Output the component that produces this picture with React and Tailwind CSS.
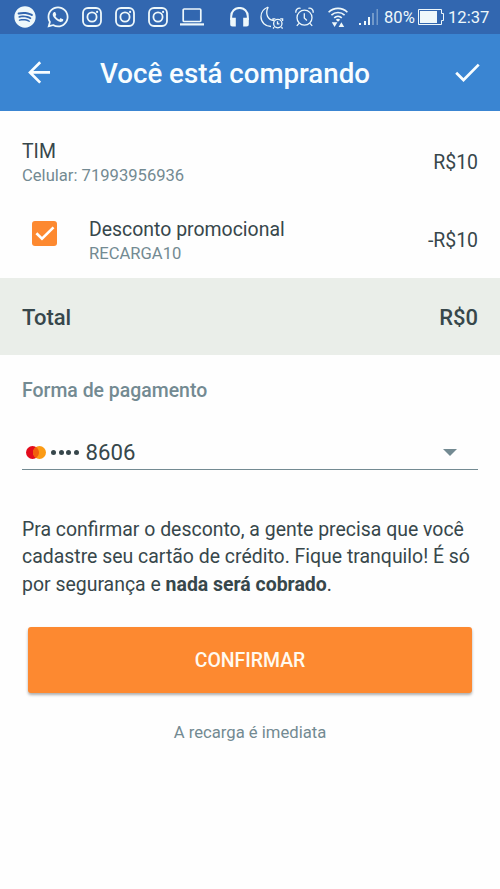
import React, { useState } from "react";
import { FaSpotify, FaWhatsapp } from "react-icons/fa";

export default function App() {
  const [discount, setDiscount] = useState(true);

  return (
    <main className="min-h-[889px] w-full max-w-[500px] bg-[#fefefe] font-['Roboto',sans-serif] text-[19.44px] leading-6 text-[#37474b]">
      <StatusBar />

      {/* toolbar */}
      <header className="flex h-[77px] items-center bg-[#3a85d2] pr-5 pl-7 text-[#f8fdff]">
        <button type="button" aria-label="Voltar">
          <svg className="block size-[23px]" viewBox="0 0 23 23" fill="none" stroke="currentColor" strokeWidth="2.7">
            <path d="M22 11.4H2M12.2 1.2 2 11.4l10.2 10.2" />
          </svg>
        </button>
        <h1 className="ml-[49px] flex-1 pt-0.5 text-[27.7px] leading-8 font-medium">
          Você está comprando
        </h1>
        <button type="button" aria-label="Concluir">
          <svg className="block h-[19px] w-[25px]" viewBox="0 0 25 19" fill="none" stroke="currentColor" strokeWidth="2.7">
            <path d="m1.2 9.8 7.3 7.2L23.7 1.6" />
          </svg>
        </button>
      </header>

      {/* itens */}
      <ul>
        <li className="flex items-center justify-between px-[22px] pt-7">
          <ItemText title="TIM" subtitle="Celular: 71993956936" />
          <span>R$10</span>
        </li>
        <li className="flex items-center px-[22px] pt-[30px] pb-[13px]">
          <button
            type="button"
            role="checkbox"
            aria-checked={discount}
            aria-label="Desconto promocional"
            onClick={() => setDiscount(!discount)}
            className="mr-8 mb-[15px] ml-[10px] grid size-[25px] place-items-center rounded-[3px] bg-[#fd8930] text-white"
          >
            {discount && (
              <svg className="block h-[15px] w-5" viewBox="0 0 20 15" fill="none" stroke="currentColor" strokeWidth="2.6">
                <path d="m1.4 7.2 5.6 5.5L18.5 1.4" />
              </svg>
            )}
          </button>
          <div className="flex flex-1 items-center justify-between">
            <ItemText title="Desconto promocional" subtitle="RECARGA10" />
            <span>-R$10</span>
          </div>
        </li>
      </ul>

      <div className="flex h-[77px] items-center justify-between bg-[#eaeee9] px-[22px] pt-[3px] text-[22px] font-medium">
        <span>Total</span>
        <span>R$0</span>
      </div>

      {/* pagamento */}
      <section className="px-[22px] pt-6">
        <h2 className="font-medium text-[#738a92]">Forma de pagamento</h2>
        <button
          type="button"
          className="mt-8 flex h-[35px] w-full items-center border-b-[1.5px] border-[#738a92] pr-[21px] pl-1 text-[22.2px]"
        >
          <svg className="block h-[13px] w-5" viewBox="0 0 20 13">
            <circle cx="6.5" cy="6.5" r="6.5" fill="#e30b1c" />
            <circle cx="13.5" cy="6.5" r="6.5" fill="#fb9b14" />
            <path d="M10 1.02a6.5 6.5 0 0 1 0 10.96 6.5 6.5 0 0 1 0-10.96Z" fill="#f25f0c" />
          </svg>
          <span className="ml-[5px] flex gap-[2.5px]">
            {[0, 1, 2, 3].map((i) => (
              <i key={i} className="size-[5px] rounded-full bg-[#37474b]" />
            ))}
          </span>
          <span className="ml-[7px] flex-1 text-left">8606</span>
          <svg className="block h-[7px] w-[14px] text-[#738a92]" viewBox="0 0 14 7" fill="currentColor">
            <path d="M0 0h14L7 7Z" />
          </svg>
        </button>

        <p className="mt-[46px] leading-[27.4px] whitespace-nowrap">
          Pra confirmar o desconto, a gente precisa que você
          <br />
          cadastre seu cartão de crédito. Fique tranquilo! É só
          <br />
          por segurança e <b className="font-bold">nada será cobrado</b>.
        </p>

        <div className="px-[6px]">
          <button
            type="button"
            className="mt-[29px] h-[66px] w-full rounded-[3px] bg-[#fd8930] pt-0.5 font-medium text-[#fffaf0] shadow-[0_2px_3px_rgba(0,0,0,.32)]"
          >
            CONFIRMAR
          </button>
        </div>

        <p className="mt-7 text-center text-[16.67px] text-[#738a92]">A recarga é imediata</p>
      </section>
    </main>
  );
}

function ItemText({ title, subtitle }) {
  return (
    <div>
      <p className="pt-px">{title}</p>
      <p className="mt-px text-[16.6px] leading-[22px] text-[#738a92]">{subtitle}</p>
    </div>
  );
}

/* ---- barra de status ---- */
function StatusBar() {
  return (
    <div className="flex h-[34px] items-center bg-[#3267b0] pl-[14px] text-[#eef8fb]">
      <FaSpotify size={22} />
      <FaWhatsapp size={24} className="ml-[10px]" />
      <div className="ml-3 flex gap-[13px]">
        <InstagramGlyph />
        <InstagramGlyph />
        <InstagramGlyph />
      </div>

      {/* notebook */}
      <svg className="ml-3 h-[18px] w-6" viewBox="0 0 24 18" fill="none" stroke="currentColor" strokeWidth="1.7">
        <rect x="3.2" y="1" width="17.6" height="12.5" rx="1" />
        <path d="M0 16.4h24" strokeWidth="2.2" />
      </svg>

      {/* fones */}
      <svg className="ml-[26px] h-5 w-[19px]" viewBox="0 0 19 20" fill="none" stroke="currentColor" strokeWidth="2">
        <path d="M1.2 13V9.2a8.3 8.3 0 0 1 16.6 0V13" />
        <path d="M.2 10.8h5.6v8.7H2.6A2.4 2.4 0 0 1 .2 17Zm18.6 0h-5.6v8.7h3.2a2.4 2.4 0 0 0 2.4-2.5Z" fill="currentColor" stroke="none" />
      </svg>

      {/* lua com alarme */}
      <svg className="ml-[11px] h-[23px] w-6" viewBox="0 0 24 23" fill="none" stroke="currentColor" strokeWidth="1.3">
        <path d="M8.2 1C3.8 2.6 1 6.2 1 10.7c0 5.6 4.4 9.8 10 9.8M8.2 1C4.6 8.5 8.1 14 14 14.6" />
        <circle cx="17.8" cy="17.6" r="4.2" />
        <path d="M17.5 15.2v2.7h1.9M13 15v-2.2h2.4M22.6 15v-2.2h-2.4M14.2 21.3l-1.2 1.2M21.4 21.3l1.2 1.2" />
      </svg>

      {/* alarme */}
      <svg className="ml-[11px] h-5 w-[19px]" viewBox="0 0 19 20" fill="none" stroke="currentColor" strokeWidth="1.3">
        <circle cx="9.5" cy="10.7" r="7.5" />
        <path d="M9.3 6.2v4.8l2.6 2.4M1 5.8C.2 3 2.6.6 5.6 1.3M18 5.8c.8-2.8-1.6-5.2-4.6-4.5M4 16.3l-2.2 2.6M15 16.3l2.2 2.6" />
      </svg>

      {/* wifi */}
      <svg className="ml-[14px] h-5 w-5" viewBox="0 0 20 20" fill="none" stroke="currentColor" strokeWidth="1.6">
        <path d="M.6 5.2a13.5 13.5 0 0 1 18.8 0M3.4 8.1a9.6 9.6 0 0 1 13.2 0M6.2 10.9a5.6 5.6 0 0 1 7.6 0" />
        <path d="M7.8 12.7a3.6 3.6 0 0 1 4.4 0L10 14.8ZM3.8 15.3h5.6L6.6 20ZM10.6 20h5.6l-2.8-4.7Z" fill="currentColor" stroke="none" />
      </svg>

      {/* sinal */}
      <svg className="ml-[11px] h-[18px] w-5" viewBox="0 0 20 18" fill="currentColor">
        <path d="M0 15h2v2H0ZM5 13h2v4H5ZM9 9h2v8H9Z" />
        <path d="M13 5h2v12h-2ZM17.5 1H19v16h-1.5Z" opacity=".35" />
      </svg>

      <span className="ml-[5px] w-[34px] pt-px text-[16.6px] leading-5">80%</span>

      {/* bateria */}
      <svg className="h-4 w-[26px]" viewBox="0 0 26 16" fill="none" stroke="currentColor" strokeWidth="1">
        <path d="M.5.5h23v4h2v7h-2v4H.5Z" />
        <path d="M2 2h17v12H2Z" fill="currentColor" stroke="none" />
      </svg>

      <span className="ml-1 pt-px text-[16.6px] leading-5">12:37</span>
    </div>
  );
}

function InstagramGlyph() {
  return (
    <svg className="size-5" viewBox="0 0 20 20" fill="none" stroke="currentColor" strokeWidth="1.8">
      <rect x="1" y="1" width="18" height="18" rx="5" />
      <circle cx="10" cy="10" r="4.6" />
      <circle cx="15.1" cy="4.9" r="1.1" fill="currentColor" stroke="none" />
    </svg>
  );
}
